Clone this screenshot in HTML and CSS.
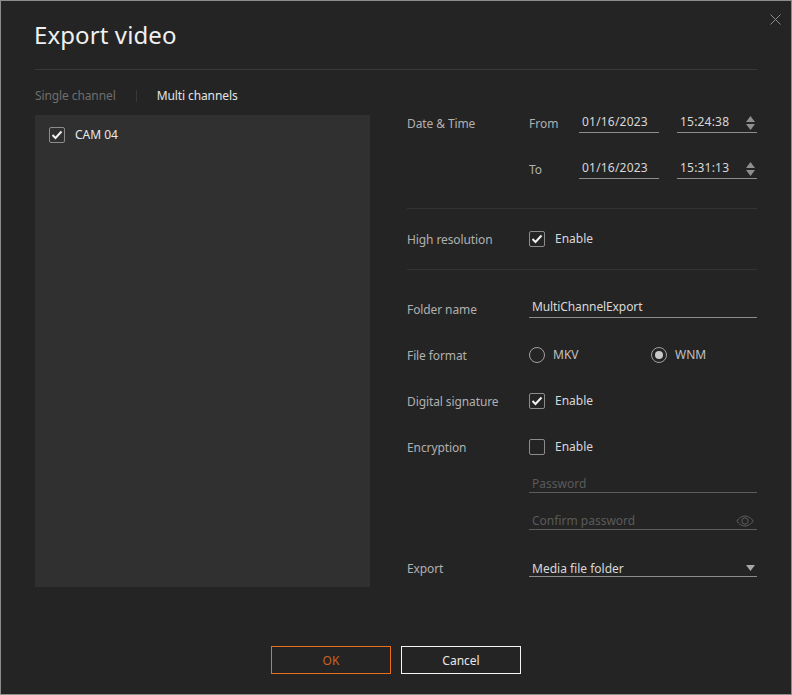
FILE: index.html
```html
<!DOCTYPE html>
<html lang="en">
<head>
<meta charset="utf-8">
<title>Export video</title>
<link rel="stylesheet" href="styles.css">
</head>
<body>
<div class="dialog">
  <svg class="close" width="11" height="11" viewBox="0 0 11 11"><path d="M.5.5l10 10M10.500.5l-10 10" stroke="#8c8c8c" fill="none"/></svg>
  <h1 class="title">Export video</h1>
  <div class="rule"></div>
  <div class="main">
    <div class="left">
      <div class="tabs">
        <span class="tab">Single channel</span>
        <span class="tab-sep"></span>
        <span class="tab active">Multi channels</span>
      </div>
      <div class="panel">
        <label class="check-row">
          <span class="box"><svg width="12" height="10" viewBox="0 0 12 10"><path d="M1.500 5l3 3 6-6.500" stroke="#f0f0f0" stroke-width="2" fill="none"/></svg></span>
          <span class="cam">CAM 04</span>
        </label>
      </div>
    </div>
    <div class="right">
      <div class="row date-row">
        <span class="label">Date &amp; Time</span>
        <span class="sub">From</span>
        <span class="field dt">01/16/2023</span>
        <span class="field dt time">15:24:38
          <svg class="spin" width="9" height="14" viewBox="0 0 9 14"><path d="M4.500 0L9 6H0zM0 8h9l-4.500 6z" fill="#8f8f8f"/></svg>
        </span>
      </div>
      <div class="row date-row gap28">
        <span class="label"></span>
        <span class="sub">To</span>
        <span class="field dt">01/16/2023</span>
        <span class="field dt time">15:31:13
          <svg class="spin" width="9" height="14" viewBox="0 0 9 14"><path d="M4.500 0L9 6H0zM0 8h9l-4.500 6z" fill="#8f8f8f"/></svg>
        </span>
      </div>
      <div class="hr hr-first"></div>
      <div class="row single">
        <span class="label">High resolution</span>
        <label class="check-row">
          <span class="box"><svg width="12" height="10" viewBox="0 0 12 10"><path d="M1.500 5l3 3 6-6.500" stroke="#f0f0f0" stroke-width="2" fill="none"/></svg></span>
          <span class="opt">Enable</span>
        </label>
      </div>
      <div class="hr"></div>
      <div class="row single gap30">
        <span class="label">Folder name</span>
        <span class="field value folder">MultiChannelExport</span>
      </div>
      <div class="row single gap28">
        <span class="label">File format</span>
        <div class="radios">
          <label class="radio-row"><span class="radio"></span><span class="opt-r">MKV</span></label>
          <label class="radio-row"><span class="radio on"></span><span class="opt-r">WNM</span></label>
        </div>
      </div>
      <div class="row single gap28">
        <span class="label">Digital signature</span>
        <label class="check-row">
          <span class="box"><svg width="12" height="10" viewBox="0 0 12 10"><path d="M1.500 5l3 3 6-6.500" stroke="#f0f0f0" stroke-width="2" fill="none"/></svg></span>
          <span class="opt">Enable</span>
        </label>
      </div>
      <div class="row single gap28">
        <span class="label">Encryption</span>
        <label class="check-row">
          <span class="box"></span>
          <span class="opt">Enable</span>
        </label>
      </div>
      <div class="row single gap19">
        <span class="label"></span>
        <span class="field hint">Password</span>
      </div>
      <div class="row single gap19">
        <span class="label"></span>
        <span class="field hint">Confirm password
          <svg class="eye" width="18" height="12" viewBox="0 0 18 12"><path d="M.8 6C3 2.800 5.800 1 9 1s6 1.800 8.200 5C15 9.200 12.200 11 9 11S3 9.200.8 6z" stroke="#5c5c5c" fill="none"/><circle cx="9" cy="6" r="3.200" stroke="#5c5c5c" fill="none"/></svg>
        </span>
      </div>
      <div class="row single gap29">
        <span class="label">Export</span>
        <span class="field value media">Media file folder
          <svg class="drop" width="9" height="6" viewBox="0 0 9 6"><path d="M0 0h9L4.500 6z" fill="#a8a8a8"/></svg>
        </span>
      </div>
    </div>
  </div>
  <div class="actions">
    <button class="btn ok" type="button">OK</button>
    <button class="btn cancel" type="button">Cancel</button>
  </div>
</div>
</body>
</html>
```

FILE: styles.css
```css
* { box-sizing: border-box; }
html, body { margin: 0; padding: 0; background: #242424; }
body { font-family: "Noto Sans", sans-serif; font-size: 12px; }
.dialog {
  position: relative;
  width: 792px;
  height: 695px;
  background: #242424;
  border: 1px solid #8c8c8c;
  padding: 0 34px;
  display: flex;
  flex-direction: column;
}
.close { position: absolute; right: 10px; top: 13px; }
.title {
  margin: 0 0 0 -1px;
  height: 68px;
  padding-top: 17px;
  font-size: 24px;
  line-height: 34px;
  font-weight: 400;
  color: #f0f0f0;
  letter-spacing: 0.1px;
}
.rule { height: 1px; background: #383838; flex: none; }
.main { display: flex; gap: 37px; flex: none; }
.left { width: 335px; flex: none; }
.tabs { height: 45px; padding-top: 6px; display: flex; align-items: center; }
.tab { color: #6e6e6e; line-height: 16px; letter-spacing: -0.1px; }
.tab.active { color: #e4e4e4; }
.tab-sep { width: 1px; height: 12px; background: #383838; margin: 0 20px; }
.panel { height: 472px; background: #303030; padding: 11px 14px; }
.check-row { display: flex; align-items: center; height: 18px; }
.box {
  width: 16px;
  height: 16px;
  border: 1px solid #8c8c8c;
  border-radius: 2px;
  display: flex;
  align-items: center;
  justify-content: center;
  flex: none;
}
.cam { margin-left: 10px; color: #e8e8e8; line-height: 16px; }
.right { width: 350px; flex: none; padding-top: 45px; }
.row { display: flex; align-items: center; height: 18px; }
.label { width: 122px; flex: none; color: #b0b0b0; line-height: 16px; margin-top: 2px; letter-spacing: -0.1px; }
.sub { width: 50px; flex: none; color: #b0b0b0; line-height: 16px; }
.date-row .label { margin-top: 0; }
.gap28 { margin-top: 28px; }
.gap30 { margin-top: 30px; }
.gap19 { margin-top: 19px; }
.gap29 { margin-top: 29px; }
.hr { height: 1px; background: #343434; margin: 21px 0; }
.hr-first { margin-top: 29px; }
.field {
  height: 18px;
  border-bottom: 1px solid #8c8c8c;
  padding: 0 3px;
  line-height: 16px;
  color: #d8d8d8;
  display: flex;
  justify-content: space-between;
  flex: 1;
}
.dt { flex: none; width: 80px; letter-spacing: 0.2px; line-height: 14px; }
.time { margin-left: 18px; }
.spin { margin: 1px -1px 0 0; }
.folder { line-height: 14px; letter-spacing: -0.1px; }
.hint { color: #5a5a5a; border-bottom-color: #5c5c5c; padding-top: 1px; }
.eye { margin: 2px 0 0 0; }
.media { padding-top: 2px; }
.drop { margin: 4px -1px 0 0; }
.radios { display: flex; }
.radio-row { width: 122px; display: flex; align-items: center; }
.radio {
  width: 16px;
  height: 16px;
  border: 1px solid #a0a0a0;
  border-radius: 50%;
  display: flex;
  align-items: center;
  justify-content: center;
}
.radio.on::after { content: ""; width: 8px; height: 8px; border-radius: 50%; background: #c8c8c8; }
.opt { margin-left: 10px; color: #d8d8d8; line-height: 16px; }
.opt-r { margin-left: 8px; color: #c0c0c0; line-height: 16px; }
.actions { display: flex; justify-content: center; gap: 10px; margin-top: 59px; }
.btn {
  width: 120px;
  height: 28px;
  background: transparent;
  font: inherit;
  padding: 0;
}
.ok { border: 1px solid #e8701e; color: #c8641e; }
.cancel { border: 1px solid #f4f4f4; color: #e8e8e8; }
```
